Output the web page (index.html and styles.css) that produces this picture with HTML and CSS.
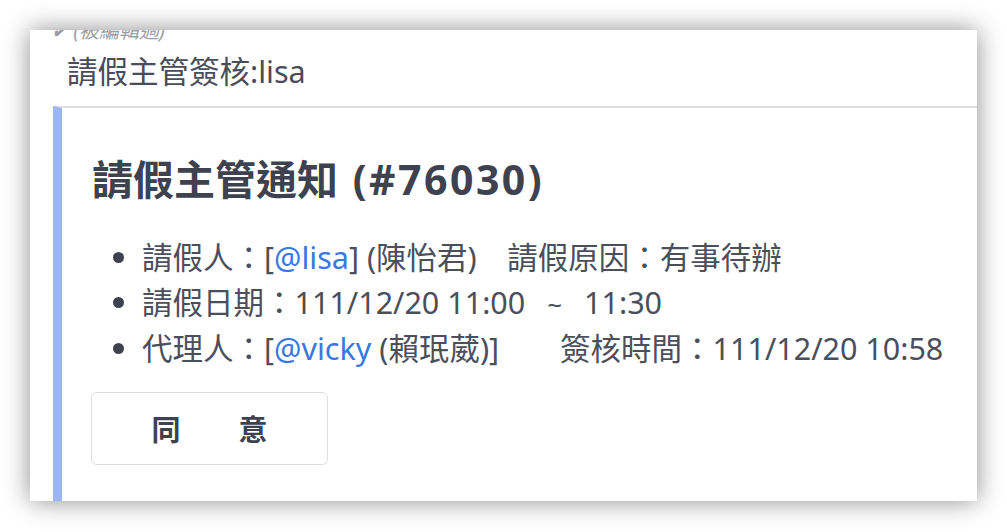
FILE: index.html
```html
<!DOCTYPE html>
<html lang="zh-TW">
<head>
<meta charset="utf-8">
<link rel="stylesheet" href="styles.css">
</head>
<body>
<div class="panel">
  <div class="edited">✔ (被編輯過)</div>
  <div class="header">請假主管簽核:lisa</div>
  <div class="card">
    <h1 class="title">請假主管通知 <span class="num">(#76030)</span></h1>
    <ul class="items">
      <li>請假人：[<a class="mention">@lisa</a>] (陳怡君)　請假原因：有事待辦</li>
      <li>請假日期：111/12/20 11:00<span class="tilde">~</span>11:30</li>
      <li>代理人：[<a class="mention">@vicky</a> (賴珉葳)]　　簽核時間：111/12/20 10:58</li>
    </ul>
    <button class="btn">同　　意</button>
  </div>
</div>
</body>
</html>
```
FILE: styles.css
```css
html, body {
  margin: 0;
  padding: 0;
  background: #ffffff;
}
body {
  padding: 30px;
  font-family: "Noto Sans", "Noto Sans CJK TC", sans-serif;
  color: #434854;
}
.panel {
  width: 947px;
  height: 471px;
  background: #fff;
  box-shadow: 0 0 24px rgba(0, 0, 0, 0.45);
  overflow: hidden;
}
.edited {
  margin-top: -11px;
  margin-left: 21px;
  height: 24px;
  font-size: 20px;
  line-height: 24px;
  font-style: italic;
  color: #9a9ea6;
}
.header {
  padding-left: 37px;
  font-size: 30.5px;
  line-height: 56px;
  height: 63px;
  color: #484d59;
}
.card {
  margin-left: 23px;
  min-height: 500px;
  border-top: 2px solid #e0e0e0;
  border-left: 9px solid #9cb6f0;
  padding: 45px 0 0 30px;
}
.title {
  margin: 0;
  font-size: 41px;
  line-height: 52px;
  font-weight: 700;
  color: #3d424e;
}
.num {
  letter-spacing: 2.5px;
  margin-left: 4px;
}
.items {
  margin: 30px 0 0 0;
  padding-left: 50px;
  font-size: 30.5px;
  line-height: 44.5px;
  color: #4a4f5b;
}
.items li::marker {
  color: #3d424e;
}
.tilde {
  display: inline-block;
  margin: 0 22px;
  font-size: 26px;
}
.mention {
  color: #3a78e3;
  text-decoration: none;
}
.btn {
  display: block;
  margin-top: 21px;
  margin-left: -1px;
  width: 237px;
  height: 73px;
  border: 1px solid #dedede;
  border-radius: 6px;
  background: #fff;
  font-family: "Noto Sans", "Noto Sans CJK TC", sans-serif;
  font-size: 29px;
  font-weight: 700;
  color: #3d424e;
}
```
